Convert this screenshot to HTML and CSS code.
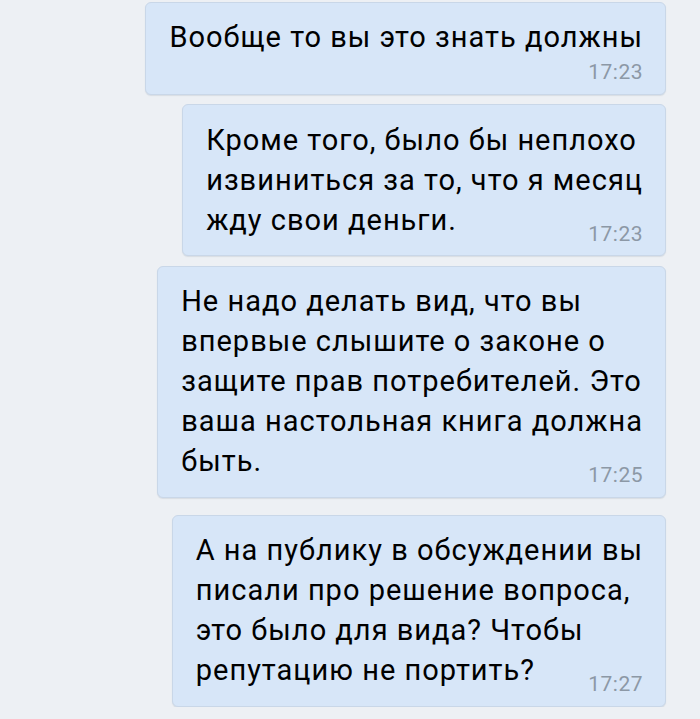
FILE: index.html
```html
<!DOCTYPE html>
<html lang="ru">
<head>
<meta charset="utf-8">
<title>Чат</title>
<link rel="stylesheet" href="styles.css">
</head>
<body>
<div class="chat">
  <div class="msg msg--time-below">
    <div class="msg__text">Вообще то вы это знать должны</div>
    <div class="msg__time">17:23</div>
  </div>
  <div class="msg">
    <div class="msg__text">Кроме того, было бы неплохо<br>извиниться за то, что я месяц<br>жду свои деньги.</div>
    <div class="msg__time">17:23</div>
  </div>
  <div class="msg">
    <div class="msg__text">Не надо делать вид, что вы<br>впервые слышите о законе о<br>защите прав потребителей. Это<br>ваша настольная книга должна<br>быть.</div>
    <div class="msg__time">17:25</div>
  </div>
  <div class="msg msg--new-group">
    <div class="msg__text">А на публику в обсуждении вы<br>писали про решение вопроса,<br>это было для вида? Чтобы<br>репутацию не портить?</div>
    <div class="msg__time">17:27</div>
  </div>
</div>
</body>
</html>
```

FILE: styles.css
```css
html, body {
  margin: 0;
  padding: 0;
  background: #edf0f4;
}

body {
  font-family: Roboto, "Noto Sans", "Liberation Sans", sans-serif;
  color: #000;
}

.chat {
  display: flex;
  flex-direction: column;
  align-items: flex-end;
  gap: 9.5px;
  padding: 1.5px 34px 0 0;
}

.msg {
  background: #d7e6f8;
  border: 1px solid #c9d7e8;
  border-radius: 6px;
  box-shadow: 0 1px 1px rgba(60, 80, 110, 0.12);
  padding: 14.5px 22px 9.5px 23px;
}

.msg--new-group {
  margin-top: 7.5px;
}

.msg__text {
  font-size: 29px;
  line-height: 40px;
  letter-spacing: 1px;
  white-space: nowrap;
}

.msg__time {
  font-size: 21px;
  line-height: 24px;
  letter-spacing: 0.5px;
  color: #8c98a6;
  text-align: right;
  margin-top: -18px;
}

.msg--time-below .msg__time {
  margin-top: 3px;
}
```
